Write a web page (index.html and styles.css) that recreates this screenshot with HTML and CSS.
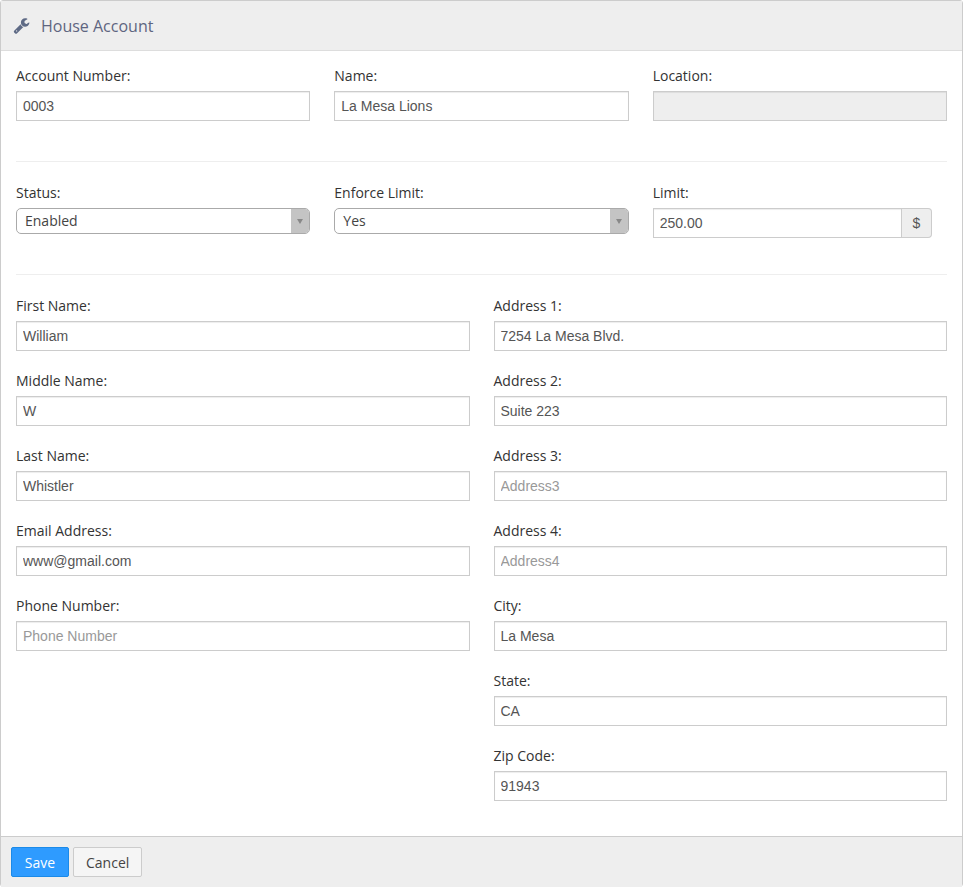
FILE: index.html
```html
<!DOCTYPE html>
<html lang="en">
<head>
<meta charset="utf-8">
<title>House Account</title>
<link rel="stylesheet" href="styles.css">
</head>
<body>
<form class="panel">
  <header class="panel-head">
    <svg class="head-icon" viewBox="0 0 1792 1792" aria-hidden="true"><path d="M448 1472q0-26-19-45t-45-19-45 19-19 45 19 45 45 19 45-19 19-45zm644-420l-682 682q-37 37-90 37-52 0-91-37l-106-108q-38-36-38-90 0-53 38-91l681-681q39 98 114.5 173.5t173.5 114.5zm634-435q0 39-23 106-47 134-164.5 217.5t-258.5 83.5q-185 0-316.5-131.5t-131.5-316.5 131.5-316.5 316.5-131.5q58 0 121.5 16.5t107.5 46.5q16 11 16 28t-16 28l-293 169v224l193 107q5-3 79-48.5t135.5-81 70.5-35.5q15 0 23.5 10t8.5 25z"/></svg>
    <span class="head-title">House Account</span>
  </header>
  <div class="panel-body">
    <div class="grid three">
      <div class="field"><label class="label">Account Number:</label><input class="input" value="0003"></div>
      <div class="field"><label class="label">Name:</label><input class="input" value="La Mesa Lions"></div>
      <div class="field"><label class="label">Location:</label><input class="input" disabled></div>
    </div>
    <hr class="rule">
    <div class="grid three">
      <div class="field"><label class="label">Status:</label>
        <div class="select"><span class="select-value">Enabled</span><span class="select-btn"><span class="select-arrow"></span></span></div>
      </div>
      <div class="field"><label class="label">Enforce Limit:</label>
        <div class="select"><span class="select-value">Yes</span><span class="select-btn"><span class="select-arrow"></span></span></div>
      </div>
      <div class="field tight"><label class="label">Limit:</label>
        <div class="input-group"><input class="input group-input" value="250.00"><span class="addon">$</span></div>
      </div>
    </div>
    <hr class="rule">
    <div class="grid two">
      <div class="column">
        <div class="field"><label class="label">First Name:</label><input class="input" value="William"></div>
        <div class="field"><label class="label">Middle Name:</label><input class="input" value="W"></div>
        <div class="field"><label class="label">Last Name:</label><input class="input" value="Whistler"></div>
        <div class="field"><label class="label">Email Address:</label><input class="input" value="www@gmail.com"></div>
        <div class="field"><label class="label">Phone Number:</label><input class="input" placeholder="Phone Number"></div>
      </div>
      <div class="column">
        <div class="field"><label class="label">Address 1:</label><input class="input" value="7254 La Mesa Blvd."></div>
        <div class="field"><label class="label">Address 2:</label><input class="input" value="Suite 223"></div>
        <div class="field"><label class="label">Address 3:</label><input class="input" placeholder="Address3"></div>
        <div class="field"><label class="label">Address 4:</label><input class="input" placeholder="Address4"></div>
        <div class="field"><label class="label">City:</label><input class="input" value="La Mesa"></div>
        <div class="field"><label class="label">State:</label><input class="input" value="CA"></div>
        <div class="field"><label class="label">Zip Code:</label><input class="input" value="91943"></div>
      </div>
    </div>
  </div>
  <footer class="panel-foot">
    <button type="button" class="btn btn-primary">Save</button>
    <button type="button" class="btn btn-default">Cancel</button>
  </footer>
</form>
</body>
</html>
```
FILE: styles.css
```css
* { box-sizing: border-box; }
html, body { margin: 0; padding: 0; background: #fff; }
body { font-family: "Open Sans", sans-serif; font-size: 14px; color: #333; }

.panel {
  width: 963px;
  height: 887px;
  border: 1px solid #ccc;
  border-radius: 3px;
  display: flex;
  flex-direction: column;
}
.panel-head {
  height: 50px;
  flex: none;
  background: #eee;
  border-bottom: 1px solid #ddd;
  display: flex;
  align-items: center;
  padding-left: 12px;
  gap: 11px;
}
.head-icon { width: 17px; height: 17px; fill: #5e6a85; }
.head-title { font-size: 16px; color: #5e6580; }

.panel-body { flex: 1; padding: 15px 15px 15px; }
.grid { display: grid; column-gap: 24px; }
.three { grid-template-columns: repeat(3, 1fr); }
.two { grid-template-columns: repeat(2, 1fr); }

.field { margin-bottom: 20px; }
.field.tight { margin-bottom: 15px; }
.label {
  display: block;
  height: 20px;
  line-height: 20px;
  margin-bottom: 5px;
  color: #333;
  font-weight: 400;
}
.input {
  display: block;
  width: 100%;
  height: 30px;
  padding: 0 6px;
  border: 1px solid #ccc;
  border-radius: 0;
  background: #fff;
  color: #555;
  font-family: "Liberation Sans", Arial, sans-serif;
  font-size: 14px;
  outline: none;
  box-shadow: inset 0 1px 1px rgba(0, 0, 0, .075);
}
.input::placeholder { color: #999; opacity: 1; }
.input:disabled { background: #eee; }

.rule { border: 0; border-top: 1px solid #eee; height: 1px; margin: 20px 0 21px; }

.select {
  display: flex;
  height: 26px;
  border: 1px solid #aaa;
  border-radius: 5px;
  background: #fff;
  overflow: hidden;
}
.select-value { flex: 1; padding-left: 8px; line-height: 24px; color: #444; }
.select-btn {
  width: 18px;
  background: #c4c4c4;
  display: flex;
  align-items: center;
  justify-content: center;
}
.select-arrow {
  width: 0;
  height: 0;
  border-left: 3.5px solid transparent;
  border-right: 3.5px solid transparent;
  border-top: 5px solid #888;
}

.input-group { display: flex; height: 30px; padding-right: 15px; }
.group-input { flex: 1; min-width: 0; }
.addon {
  width: 30px;
  border: 1px solid #ccc;
  border-left: 0;
  border-radius: 0 4px 4px 0;
  background: #eee;
  color: #555;
  font-family: "Liberation Sans", Arial, sans-serif;
  text-align: center;
  line-height: 28px;
}

.panel-foot {
  height: 51px;
  flex: none;
  background: #eee;
  border-top: 1px solid #ccc;
  padding: 10px;
  display: flex;
  gap: 4px;
}
.btn {
  height: 30px;
  border-radius: 2px;
  font-family: "Open Sans", sans-serif;
  font-size: 14px;
  padding: 0 12px;
  cursor: pointer;
}
.btn-primary { width: 58px; background: #2e9bff; border: 1px solid #1b8ae8; color: #fff; }
.btn-default { width: 69px; background: #f5f5f5; border: 1px solid #ccc; color: #444; }
```
